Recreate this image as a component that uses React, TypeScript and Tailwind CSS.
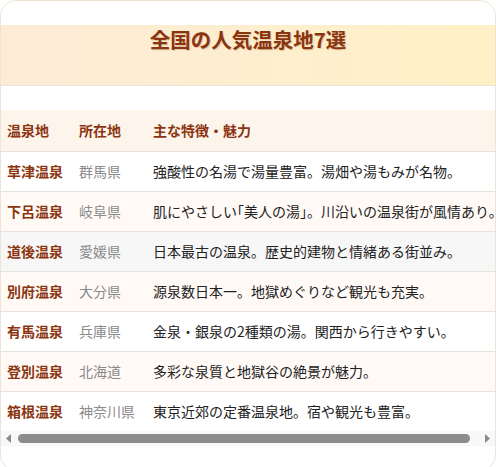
import React from 'react';

type Onsen = { name: string; pref: string; note: React.ReactNode };

// brackets get half-width spacing, as in the reference
const Br = ({ c }: { c: string }) => <span className="[font-feature-settings:'halt']">{c}</span>;

const onsens: Onsen[] = [
  { name: '草津温泉', pref: '群馬県', note: '強酸性の名湯で湯量豊富。湯畑や湯もみが名物。' },
  {
    name: '下呂温泉',
    pref: '岐阜県',
    note: (
      <>
        肌にやさしい<Br c="「" />美人の湯<Br c="」" />。川沿いの温泉街が風情あり。
      </>
    ),
  },
  { name: '道後温泉', pref: '愛媛県', note: '日本最古の温泉。歴史的建物と情緒ある街並み。' },
  { name: '別府温泉', pref: '大分県', note: '源泉数日本一。地獄めぐりなど観光も充実。' },
  { name: '有馬温泉', pref: '兵庫県', note: '金泉・銀泉の2種類の湯。関西から行きやすい。' },
  { name: '登別温泉', pref: '北海道', note: '多彩な泉質と地獄谷の絶景が魅力。' },
  { name: '箱根温泉', pref: '神奈川県', note: '東京近郊の定番温泉地。宿や観光も豊富。' },
];

const rowBg = (i: number) => {
  if (i === 2) return 'bg-[#f7f7f7]';
  return i % 2 === 1 ? 'bg-[#fffaf6]' : 'bg-white';
};

const ScrollBar = () => (
  <div className="flex h-[15px] items-center bg-[#f8f8f8]">
    <div className="flex w-[15px] justify-center">
      <svg width="7" height="9" viewBox="0 0 7 9">
        <polygon points="6,0 6,9 1,4.5" fill="#8a8a8a" />
      </svg>
    </div>
    <div className="ml-[2px] mr-[10px] h-[9px] flex-1 rounded-full bg-[#8c8c8c]" />
    <div className="flex w-[15px] justify-center">
      <svg width="7" height="9" viewBox="0 0 7 9">
        <polygon points="1,0 1,9 6,4.5" fill="#8a8a8a" />
      </svg>
    </div>
  </div>
);

export default function App() {
  return (
    <div className="font-['Noto_Sans_CJK_JP','Noto_Sans',sans-serif] bg-white">
      <div className="w-[496px] rounded-2xl border border-[#efe4d4] bg-white py-6 flex flex-col gap-6">
        {/* Title band */}
        <div className="h-[61px] border-b border-[#ebe5dc] bg-gradient-to-r from-[#fdebd7] to-[#fef1c6]">
          <h2 className="pt-[2px] text-center text-[20.5px] font-bold leading-[1.2] text-[#8b3510] [text-shadow:1px_1px_1px_rgba(120,60,20,0.2)]">
            全国の人気温泉地7選
          </h2>
        </div>

        {/* Table */}
        <div>
          <div className="overflow-hidden">
            <table className="border-collapse whitespace-nowrap text-[14px] leading-[1.5]">
              <thead>
                <tr className="bg-[#fdf4eb]">
                  <th className="pl-1.5 pr-2 py-2.5 text-left font-bold text-[#8b3510]">温泉地</th>
                  <th className="pl-2 pr-2.5 py-2.5 text-left font-bold text-[#8b3510]">所在地</th>
                  <th className="px-2 py-2.5 text-left font-bold text-[#8b3510]">主な特徴・魅力</th>
                </tr>
              </thead>
              <tbody>
                {onsens.map((o, i) => (
                  <tr key={o.name} className={`${rowBg(i)} border-t border-[#e6e3df]`}>
                    <td className="pl-1.5 pr-2 py-[9px] font-bold text-[#8b3510]">{o.name}</td>
                    <td className="pl-2 pr-2.5 py-[9px] text-[#8a8a8a]">{o.pref}</td>
                    <td className="px-2 py-[9px] text-[#222222]">{o.note}</td>
                  </tr>
                ))}
              </tbody>
            </table>
          </div>
          <ScrollBar />
        </div>
      </div>
    </div>
  );
}
